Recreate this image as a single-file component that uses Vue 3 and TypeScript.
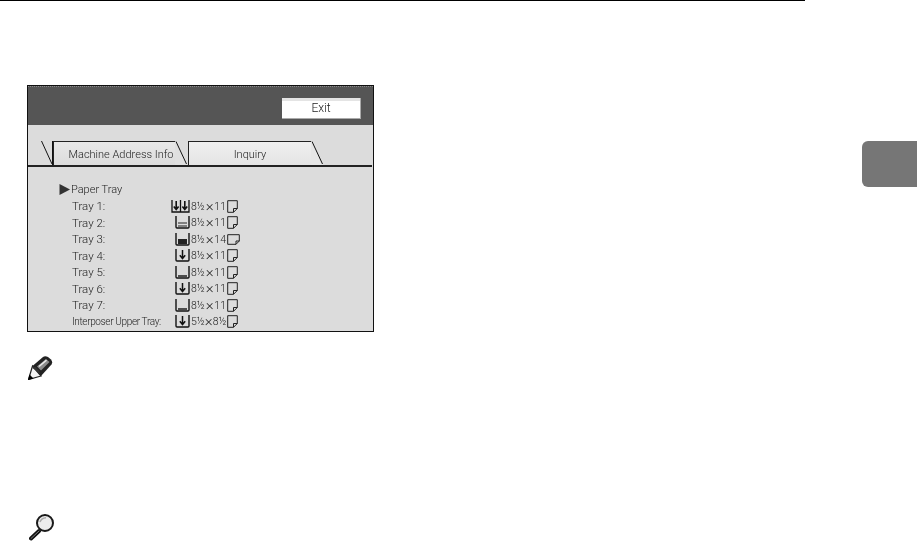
<script setup lang="ts">
type Bin = 'arrow' | 'arrow2' | 'low' | 'mid' | 'full'

interface Tray {
  name: string
  bin: Bin
  size: [string, string]
  wide?: boolean
}

const trays: Tray[] = [
  { name: 'Tray 1:', bin: 'arrow2', size: ['8½', '11'] },
  { name: 'Tray 2:', bin: 'mid', size: ['8½', '11'] },
  { name: 'Tray 3:', bin: 'full', size: ['8½', '14'], wide: true },
  { name: 'Tray 4:', bin: 'arrow', size: ['8½', '11'] },
  { name: 'Tray 5:', bin: 'low', size: ['8½', '11'] },
  { name: 'Tray 6:', bin: 'arrow', size: ['8½', '11'] },
  { name: 'Tray 7:', bin: 'low', size: ['8½', '11'] },
  { name: 'Interposer Upper Tray:', bin: 'arrow', size: ['5½', '8½'] },
]
</script>

<template>
  <div class="page">
    <div class="main">
      <div class="rule"></div>

      <div class="panel">
        <div class="head">
          <div class="exit">Exit</div>
        </div>

        <div class="tabs">
          <svg class="stub" width="12" height="24" viewBox="0 0 12 24">
            <path d="M0.5 0 L11 23" fill="none" stroke="#111" />
            <path d="M11.5 0 V24" fill="none" stroke="#111" />
          </svg>
          <div class="tab first">Machine Address Info</div>
          <svg class="slant" width="13" height="24" viewBox="0 0 13 24">
            <path d="M0 0 L1 0 L12 24 L0 24 Z" fill="#e0e0e0" />
            <path d="M1 0.5 L11.5 23" fill="none" stroke="#111" />
          </svg>
          <div class="tab second">Inquiry</div>
          <svg class="slant" width="13" height="24" viewBox="0 0 13 24">
            <path d="M0 0 L1 0 L12 24 L0 24 Z" fill="#e6e6e6" />
            <path d="M1 0.5 L11.5 23" fill="none" stroke="#111" />
          </svg>
        </div>

        <div class="content">
          <div class="section">
            <svg width="11" height="11" viewBox="0 0 11 11">
              <path d="M0.5 0 L11 5.5 L0.5 11 Z" fill="#333" />
            </svg>
            <span>Paper Tray</span>
          </div>

          <div class="list">
            <div v-for="tray in trays" :key="tray.name" class="row">
              <span class="name" :class="{ small: tray.name.length > 10 }">{{ tray.name }}</span>
              <span class="bin">
                <svg v-if="tray.bin === 'arrow2'" width="19" height="13" viewBox="0 0 19 13">
                  <path d="M1 0 V12 H18 V0 M9.5 0 V12" fill="none" stroke="#111" stroke-width="1.3" />
                  <path d="M5.2 1 V9 M2.8 6.5 L5.2 9.5 L7.6 6.5 M13.8 1 V9 M11.4 6.5 L13.8 9.5 L16.2 6.5" fill="none" stroke="#111" stroke-width="1.6" />
                </svg>
                <svg v-else width="15" height="13" viewBox="0 0 15 13">
                  <path d="M1 0 V11 Q1 12 2 12 H13 Q14 12 14 11 V0" fill="none" stroke="#111" stroke-width="1.4" />
                  <template v-if="tray.bin === 'arrow'">
                    <path d="M7.5 1 V9 M4.8 6.2 L7.5 9.5 L10.2 6.2" fill="none" stroke="#111" stroke-width="1.5" />
                  </template>
                  <path v-if="tray.bin === 'low'" d="M3 10 H12" stroke="#111" stroke-width="1.4" />
                  <path v-if="tray.bin === 'mid'" d="M3 7 H12 M3 10 H12" stroke="#222" stroke-width="1.2" />
                  <rect v-if="tray.bin === 'full'" x="3" y="6" width="9" height="5" fill="#222" />
                </svg>
              </span>
              <span class="size">
                <span class="dim">{{ tray.size[0] }}</span>
                <span class="times">×</span>
                <span class="dim">{{ tray.size[1] }}</span>
              </span>
              <svg v-if="tray.wide" class="sheet" width="13" height="11" viewBox="0 0 13 11">
                <path d="M0.7 0.7 H12.3 V7 L9 10.3 H0.7 Z M12.3 7 H9 V10.3" fill="none" stroke="#222" />
              </svg>
              <svg v-else class="sheet" width="11" height="13" viewBox="0 0 11 13">
                <path d="M0.7 0.7 H10.3 V8.5 L6.5 12.3 H0.7 Z M10.3 8.5 H6.5 V12.3" fill="none" stroke="#222" />
              </svg>
            </div>
          </div>
        </div>
      </div>

      <svg class="note" width="25" height="24" viewBox="0 0 25 24">
        <path d="M4.5 10 L15 1 Q17 -0.5 20 1 L23 3.5 Q25 6 23.5 8.5 L13 20 Z" fill="#222" />
        <path d="M9 10.5 L18 3 L21.5 6 L13 14.5 Z" fill="#8a8a8a" />
        <path d="M11 10.5 L18.5 4.2" stroke="#e8e8e8" stroke-width="1.6" fill="none" />
        <path d="M4.5 10 L13 20 L0.5 23.5 Z" fill="#f4f4f4" stroke="#222" stroke-width="1.2" />
        <path d="M4.5 12 Q8 9.5 9.5 13 Q12 14 11.5 17.5" fill="#333" />
        <path d="M0 24 L1.5 18.5 L5.5 22.5 Z" fill="#000" />
      </svg>

      <svg class="lens" width="26" height="28" viewBox="0 0 26 28">
        <path d="M11 18 L3 25.5" stroke="#111" stroke-width="4" stroke-linecap="round" />
        <path d="M11 18 L3 25.5" stroke="#999" stroke-width="0.8" stroke-linecap="round" />
        <circle cx="17" cy="10" r="8" fill="#ececec" stroke="#1a1a1a" stroke-width="2" />
        <path d="M12 9 Q13.5 5 18 4.8" fill="none" stroke="#aaa" stroke-width="1.5" />
      </svg>
    </div>

    <div class="side">
      <div class="chapter"></div>
    </div>
  </div>
</template>

<style scoped>
.page {
  display: flex;
  width: 917px;
  height: 553px;
  overflow: hidden;
  background: #fff;
  font-family: Roboto, "Liberation Sans", sans-serif;
}

.main {
  width: 862px;
  display: flex;
  flex-direction: column;
  align-items: flex-start;
}

.rule {
  width: 805px;
  height: 1px;
  background: #000;
}

.panel {
  box-sizing: border-box;
  width: 347px;
  height: 247px;
  margin: 84px 0 0 27px;
  border: 1px solid #111;
  background: #dcdcdc;
  color: #222;
  font-weight: 300;
  filter: blur(0.3px);
}

.head {
  box-sizing: border-box;
  height: 39px;
  padding: 11px 12px 0 0;
  display: flex;
  justify-content: flex-end;
  background: #555;
  border-top: 1px dotted #888;
}

.exit {
  box-sizing: border-box;
  width: 79px;
  height: 21px;
  line-height: 21px;
  text-align: center;
  font-size: 12px;
  background: linear-gradient(#e4e4e4 0 3px, #fff 3px);
  border-right: 1px solid #aaa;
  border-bottom: 1px solid #aaa;
}

.tabs {
  display: flex;
  height: 24px;
  margin-top: 16px;
  padding-left: 13px;
  border-bottom: 2px solid #222;
  margin-right: 1px;
}

.stub {
  flex: none;
}

.tab {
  box-sizing: border-box;
  height: 24px;
  line-height: 25px;
  text-align: center;
  font-size: 11px;
  border-top: 1px solid #222;
  border-left: 1px solid #222;
  background: linear-gradient(#e8e8e8, #dcdcdc);
}

.tab.first {
  width: 122px;
  padding-left: 13px;
  white-space: nowrap;
}

.tab.second {
  width: 123px;
  background: linear-gradient(#f0f0f0, #e4e4e4);
}

.slant {
  flex: none;
}

.content {
  padding: 14px 0 0 31px;
}

.section {
  display: flex;
  align-items: center;
  gap: 1px;
  height: 16px;
  font-size: 11px;
}

.list {
  margin-top: 1px;
  padding-left: 13px;
}

.row {
  display: flex;
  align-items: center;
  height: 16.5px;
  font-size: 11.5px;
}

.name {
  width: 99px;
  flex: none;
}

.name.small {
  font-size: 10px;
  letter-spacing: -0.35px;
  white-space: nowrap;
}

.bin {
  width: 19px;
  flex: none;
  display: flex;
  justify-content: flex-end;
  margin-right: 1px;
}

.size {
  width: 35px;
  flex: none;
  display: flex;
  align-items: center;
  justify-content: space-between;
  font-size: 10.5px;
  white-space: nowrap;
}

.times {
  font-size: 15px;
  line-height: 1;
}

.sheet {
  flex: none;
  margin-left: 1px;
}

.note {
  margin: 24px 0 0 28px;
  filter: blur(0.3px);
}

.lens {
  margin: 133px 0 0 28px;
  filter: blur(0.3px);
}

.side {
  flex: 1;
  padding-top: 141px;
}

.chapter {
  height: 46px;
  background: #767676;
  border-radius: 6px 0 0 6px;
}
</style>
